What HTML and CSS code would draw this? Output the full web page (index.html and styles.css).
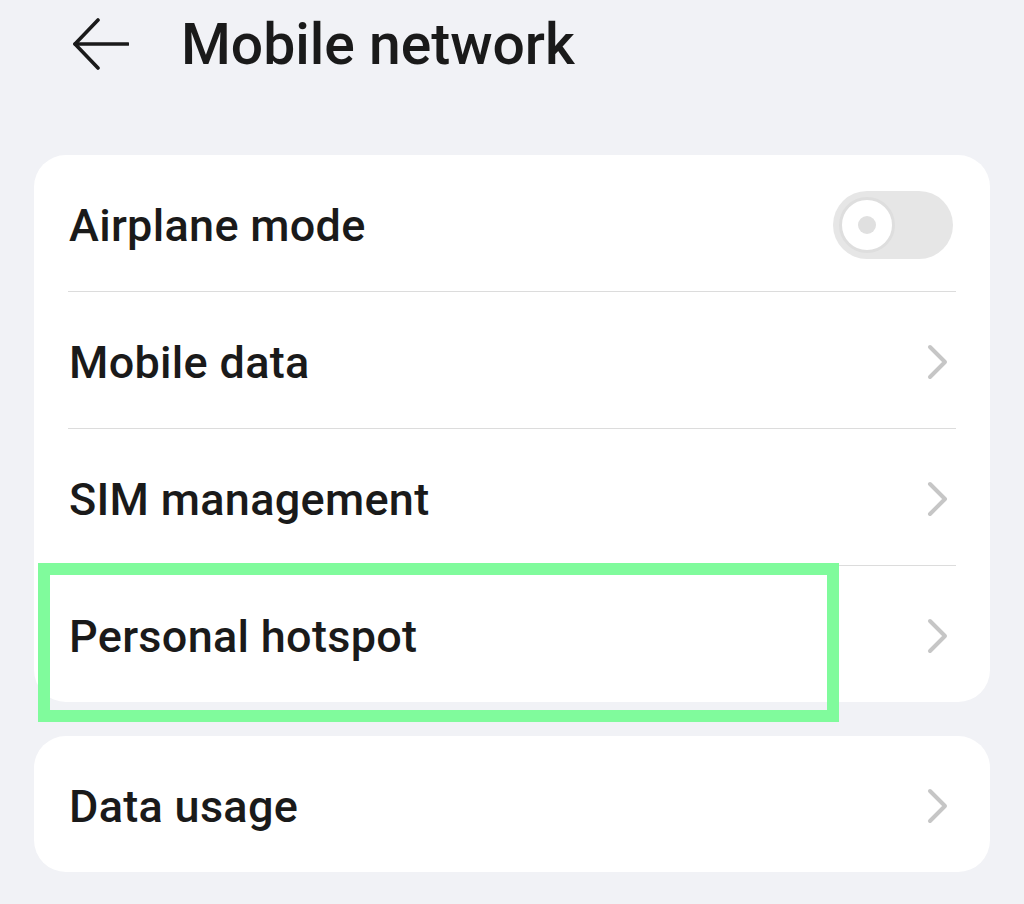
FILE: index.html
```html
<!DOCTYPE html>
<html lang="en">
<head>
<meta charset="utf-8">
<title>Mobile network</title>
<link rel="stylesheet" href="styles.css">
</head>
<body>
<div class="page">
  <header class="header">
    <svg class="back" width="56" height="54" viewBox="0 0 56 54" fill="none" stroke="#1a1a1a" stroke-width="3.6" stroke-linecap="round" stroke-linejoin="round">
      <path d="M2 27 H55"/>
      <path d="M25 3 L2 27 L25 51"/>
    </svg>
    <h1 class="title">Mobile network</h1>
  </header>
  <main class="content">
    <section class="card">
      <div class="row">
        <div class="row-inner">
          <span class="label">Airplane mode</span>
          <span class="toggle"><span class="knob"><span class="dot"></span></span></span>
        </div>
      </div>
      <div class="row">
        <div class="row-inner">
          <span class="label">Mobile data</span>
          <svg class="chev" width="22" height="36" viewBox="0 0 22 36" fill="none" stroke="#c6c6c6" stroke-width="4" stroke-linecap="round" stroke-linejoin="round"><path d="M3 3 L18 18 L3 33"/></svg>
        </div>
      </div>
      <div class="row">
        <div class="row-inner">
          <span class="label">SIM management</span>
          <svg class="chev" width="22" height="36" viewBox="0 0 22 36" fill="none" stroke="#c6c6c6" stroke-width="4" stroke-linecap="round" stroke-linejoin="round"><path d="M3 3 L18 18 L3 33"/></svg>
        </div>
      </div>
      <div class="row row-last row-highlighted">
        <div class="row-inner">
          <span class="label">Personal hotspot</span>
          <svg class="chev" width="22" height="36" viewBox="0 0 22 36" fill="none" stroke="#c6c6c6" stroke-width="4" stroke-linecap="round" stroke-linejoin="round"><path d="M3 3 L18 18 L3 33"/></svg>
        </div>
        <div class="highlight"></div>
      </div>
    </section>
    <section class="card">
      <div class="row row-last">
        <div class="row-inner">
          <span class="label">Data usage</span>
          <svg class="chev" width="22" height="36" viewBox="0 0 22 36" fill="none" stroke="#c6c6c6" stroke-width="4" stroke-linecap="round" stroke-linejoin="round"><path d="M3 3 L18 18 L3 33"/></svg>
        </div>
      </div>
    </section>
  </main>
</div>
</body>
</html>
```
FILE: styles.css
```css
* { box-sizing: border-box; }
html, body {
  margin: 0;
  padding: 0;
  background: #f1f2f6;
}
body {
  font-family: Roboto, "Noto Sans", "Liberation Sans", sans-serif;
  color: #1a1a1a;
  width: 1024px;
  height: 904px;
  overflow: hidden;
}
.header {
  display: flex;
  align-items: center;
  height: 88px;
  padding-left: 73px;
}
.back {
  display: block;
  flex: none;
}
.title {
  margin: 0 0 0 52px;
  font-size: 57px;
  font-weight: 500;
  letter-spacing: 0;
  line-height: 1;
}
.content {
  padding: 67px 34px 0;
  display: flex;
  flex-direction: column;
  gap: 34px;
}
.card {
  background: #ffffff;
  border-radius: 32px;
}
.row {
  height: 137px;
  padding: 0 34px 0 34px;
}
.row-inner {
  height: 100%;
  display: flex;
  align-items: center;
  justify-content: space-between;
  border-bottom: 1px solid #dcdcdc;
  padding-left: 1px;
  padding-top: 4px;
}
.row-last {
  height: 136px;
}
.row-last .row-inner {
  border-bottom: none;
}
.label {
  font-size: 45px;
  font-weight: 500;
  line-height: 1;
  letter-spacing: 0.3px;
}
.chev {
  display: block;
  margin-right: 7px;
}
.toggle {
  width: 120px;
  height: 68px;
  border-radius: 34px;
  background: #e6e6e6;
  display: flex;
  align-items: center;
  padding-left: 6px;
  margin-right: 3px;
}
.knob {
  width: 56px;
  height: 56px;
  border-radius: 50%;
  background: #ffffff;
  border: 3px solid #dedede;
  display: flex;
  align-items: center;
  justify-content: center;
}
.dot {
  width: 18px;
  height: 18px;
  border-radius: 50%;
  background: #e0e0e0;
}
.row-highlighted {
  position: relative;
}
.highlight {
  position: absolute;
  left: 4px;
  top: -3px;
  width: 801px;
  height: 159px;
  border: 12px solid #80fb9c;
  pointer-events: none;
}
```
